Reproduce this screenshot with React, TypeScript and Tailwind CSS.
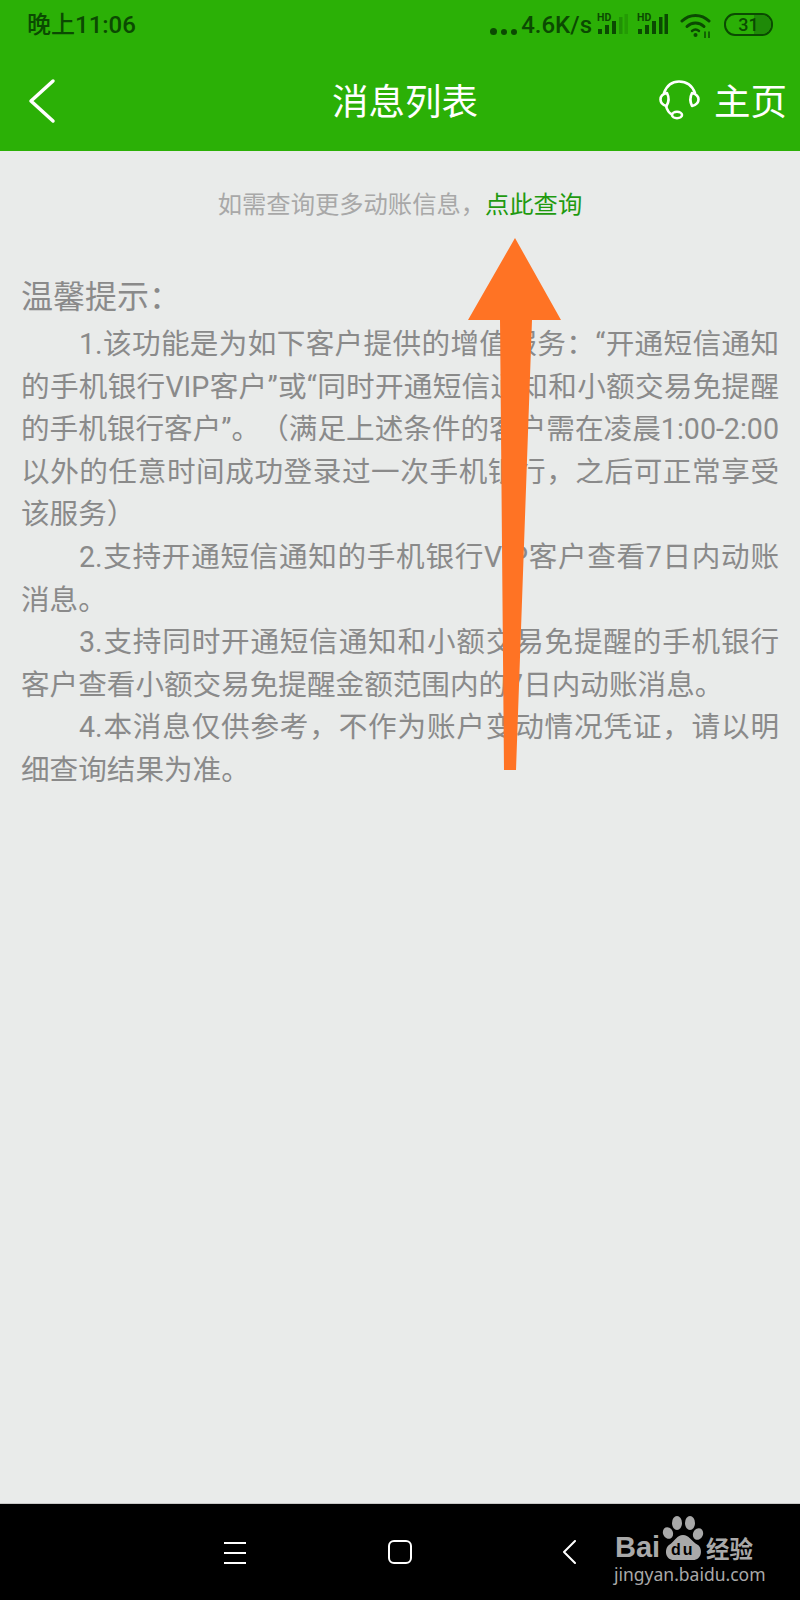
const tips = [
  "1.该功能是为如下客户提供的增值服务：“开通短信通知的手机银行VIP客户”或“同时开通短信通知和小额交易免提醒的手机银行客户”。（满足上述条件的客户需在凌晨1:00-2:00以外的任意时间成功登录过一次手机银行，之后可正常享受该服务）",
  "2.支持开通短信通知的手机银行VIP客户查看7日内动账消息。",
  "3.支持同时开通短信通知和小额交易免提醒的手机银行客户查看小额交易免提醒金额范围内的7日内动账消息。",
  "4.本消息仅供参考，不作为账户变动情况凭证，请以明细查询结果为准。",
]

function Signal({ faded }: { faded?: boolean }) {
  return (
    <svg width="31" height="24" viewBox="0 -2 31 24" className="text-[#0b4a02]">
      <text x="0" y="8" fontSize="10.5" fontWeight="700" fill="currentColor" fontFamily="Roboto, sans-serif">HD</text>
      <rect x="1" y="16" width="4" height="5" fill="currentColor" />
      <rect x="8" y="12" width="4" height="9" fill="currentColor" />
      <rect x="15" y="8" width="4" height="13" fill="currentColor" />
      <rect x="22" y="4" width="3.5" height="17" fill="currentColor" opacity={faded ? 0.3 : 1} />
      <rect x="27.5" y="1" width="3.5" height="20" fill="currentColor" opacity={faded ? 0.2 : 1} />
    </svg>
  )
}

function StatusBar() {
  return (
    <div className="flex items-start h-[52px] pt-[8px] pl-[27px] pr-[27px] text-[#0b4a02] font-['Roboto','Noto_Sans_CJK_SC',sans-serif]">
      <span className="text-[24px] leading-[34px] font-medium">晚上11:06</span>
      <div className="ml-auto flex items-start">
        <div className="flex gap-[4px] mt-[20px] mr-[4px]">
          <span className="w-[7px] h-[7px] rounded-full bg-[#0b4a02]" />
          <span className="w-[6px] h-[6px] rounded-full bg-[#0b4a02] mt-[1px]" />
          <span className="w-[6px] h-[6px] rounded-full bg-[#0b4a02] mt-[1px]" />
        </div>
        <span className="text-[24px] leading-[34px] font-medium">4.6K/s</span>
        <div className="ml-[5px] mt-[3px]"><Signal faded /></div>
        <div className="ml-[9px] mt-[3px]"><Signal /></div>
        <svg width="32" height="26" viewBox="0 0 32 26" className="ml-[12px] mt-[4px]" fill="none" stroke="#0b4a02" strokeWidth="3" strokeLinecap="round">
          <path d="M2 9C9.500 1.500 21.500 1.500 29 9" />
          <path d="M7 14.500C11.800 9.800 19.200 9.800 24 14.500" />
          <path d="M12 19C14.200 17.200 16.800 17.200 19 19" strokeWidth="2.500" />
          <circle cx="15.500" cy="23" r="2" fill="#0b4a02" stroke="none" />
          <path d="M25 20V26M29 20V26" strokeWidth="1.500" />
        </svg>
        <div className="ml-[12px] mt-[5px] w-[49px] h-[23px] rounded-[11px] border-[2.5px] border-[#0b4a02] overflow-hidden relative flex items-center justify-center">
          <span className="absolute right-0 top-0 h-full w-[17px] bg-[#1f8a08]" />
          <span className="relative text-[18px] leading-none font-medium">31</span>
        </div>
      </div>
    </div>
  )
}

function Header() {
  return (
    <div className="bg-[#2bb006] h-[151px] flex flex-col shrink-0">
      <StatusBar />
      <div className="relative flex items-center justify-center h-[96px] pl-[10px] text-white text-[36.500px] font-['Noto_Sans_CJK_SC',sans-serif]">
        <span className="leading-none">消息列表</span>
        <svg width="30" height="46" viewBox="0 0 30 46" className="absolute left-[27px] top-[26px]" fill="none" stroke="#fff" strokeWidth="3.500" strokeLinecap="round" strokeLinejoin="round">
          <path d="M26 3L4 23L26 43" />
        </svg>
        <div className="absolute right-[13px] inset-y-0 flex items-center gap-[13px]">
          <svg width="42" height="40" viewBox="0 0 42 40" fill="none" stroke="#fff" strokeWidth="2.600" strokeLinecap="round" strokeLinejoin="round">
            <path d="M5 13C8 5 14 1.500 20 1.500C27 1.500 33 5 36 13" />
            <path d="M8 13C3 14 1.500 17 1.500 19.500C1.500 22.500 3.500 25 7.500 26C10 22 10 17 8 13Z" />
            <path d="M33 13C37 14 39.500 16 39.500 19.500C39.500 23 37 25 33 26C31 22 31 17 33 13Z" />
            <path d="M7 26C8 30 10 33 13 34.500" />
            <ellipse cx="18" cy="35" rx="5" ry="3.200" />
          </svg>
          <span className="leading-none">主页</span>
        </div>
      </div>
    </div>
  )
}

function NavBar() {
  return (
    <div className="relative bg-black h-[97px] shrink-0 border-t border-[#c8c8c8] flex items-start pt-[36px] pl-[224px]">
      <div className="w-[22px] h-[22px] flex flex-col justify-between mt-[2px]">
        <span className="h-[2px] bg-white" />
        <span className="h-[2px] bg-white" />
        <span className="h-[2px] bg-white" />
      </div>
      <div className="ml-[142px] w-[24px] h-[24px] rounded-[6px] border-2 border-white" />
      <svg width="14" height="24" viewBox="0 0 14 24" className="ml-[150px]" fill="none" stroke="#fff" strokeWidth="2" strokeLinecap="round" strokeLinejoin="round">
        <path d="M13 1L2 12L13 23" />
      </svg>
      {/* watermark sits over the nav bar */}
      <div className="absolute left-[614px] top-[12px] w-[142px] h-[78px] text-[#a9a9a9]">
        <svg width="48" height="46" viewBox="0 0 48 46" className="absolute left-[46px] top-0" fill="#a9a9a9">
          <ellipse cx="8" cy="17" rx="5" ry="6" transform="rotate(-25 8 17)" />
          <ellipse cx="17" cy="7" rx="5" ry="7" />
          <ellipse cx="30" cy="7" rx="5" ry="7" />
          <ellipse cx="38" cy="18" rx="5" ry="6" transform="rotate(25 38 18)" />
          <path d="M23 19C17 19 15 25 9 29C4 33 5 44 14 44H33C42 44 43 33 38 29C31 25 29 19 23 19Z" />
        </svg>
        <span className="absolute left-[1px] top-[13px] text-[29px] leading-[36px] font-bold font-['Liberation_Sans',sans-serif]">Bai</span>
        <span className="absolute left-[57px] top-[26px] text-[16px] leading-[16px] font-bold tracking-[2px] text-black font-['Liberation_Sans',sans-serif]">du</span>
        <span className="absolute left-[92px] top-[17px] text-[23.5px] leading-[30px] font-bold font-['Noto_Sans_CJK_SC',sans-serif] whitespace-nowrap">经验</span>
        <span className="absolute left-0 top-[47px] text-[17.500px] leading-[22px] whitespace-nowrap font-['Noto_Sans',sans-serif]">jingyan.baidu.com</span>
      </div>
    </div>
  )
}

export default function App() {
  return (
    <div lang="zh-CN" className="relative w-[800px] h-[1600px] flex flex-col bg-[#e9ebea] overflow-hidden font-['Roboto','Noto_Sans_CJK_SC',sans-serif] [text-spacing-trim:space-all]">
      <Header />
      <main className="flex-1 px-[21px]">
        <p className="mt-[37px] text-center text-[24.3px] leading-[34px] text-[#a8a8a8]">
          如需查询更多动账信息，<span className="text-[#1f9a10]">点此查询</span>
        </p>
        <h2 className="mt-[52px] text-[32px] leading-[46px] font-normal text-[#8a8a8a]">温馨提示：</h2>
        <div className="mt-[3px] text-[28.6px] leading-[42.600px] text-[#8a8a8a] text-justify">
          {tips.map((t) => (
            <p key={t} className="indent-[58px]">{t}</p>
          ))}
        </div>
      </main>
      <NavBar />
      {/* annotation arrow drawn over the page */}
      <svg width="93" height="532" viewBox="0 0 93 532" className="absolute left-[468px] top-[238px]" fill="#ff7324">
        <path d="M47 0L93 82H64L48 532H36L32 82H0Z" />
      </svg>
    </div>
  )
}
